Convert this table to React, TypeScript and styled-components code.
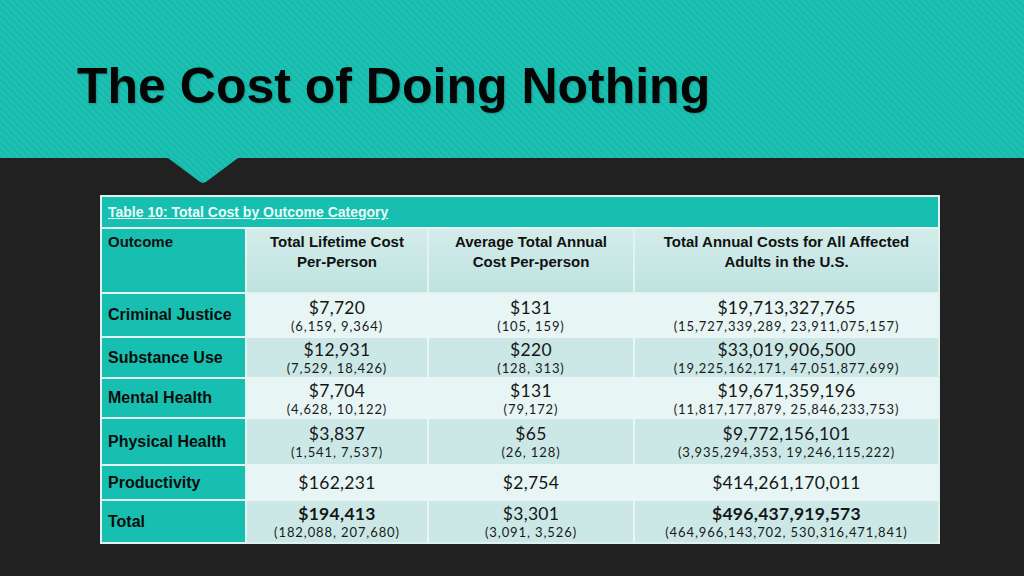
import React from 'react';
import styled, { createGlobalStyle } from 'styled-components';

const GlobalStyle = createGlobalStyle`
  html, body {
    margin: 0;
    padding: 0;
    background: #212121;
  }
  body {
    font-family: "Liberation Sans", Arial, sans-serif;
  }
`;

const Slide = styled.div`
  width: 1024px;
  height: 576px;
  background: #212121;
  display: flex;
  flex-direction: column;
  overflow: hidden;
`;

const TitleBand = styled.header`
  position: relative;
  height: 158px;
  flex: none;
  display: flex;
  align-items: center;
  padding-left: 77px;
  padding-top: 14px;
  box-sizing: border-box;
  background-color: #1bc2b3;
  background-image: repeating-linear-gradient(
    45deg,
    rgba(0, 0, 0, 0.05) 0px,
    rgba(0, 0, 0, 0.05) 2px,
    rgba(255, 255, 255, 0) 2px,
    rgba(255, 255, 255, 0) 5px
  );

  &::after {
    content: '';
    position: absolute;
    left: 168px;
    top: 158px;
    width: 70px;
    height: 25px;
    background: inherit;
    background-color: #1bc2b3;
    clip-path: polygon(0 0, 100% 0, 54% 96%, 50% 100%, 46% 96%);
  }
`;

const Title = styled.h1`
  margin: 0;
  font-family: "Liberation Sans", Arial, sans-serif;
  font-weight: 700;
  font-size: 50px;
  color: #050505;
  letter-spacing: 0;
  text-shadow: 1px 1px 2px rgba(0, 0, 0, 0.2);
`;

const Body = styled.main`
  padding: 37px 0 0 100px;
`;

const Table = styled.table`
  width: 840px;
  border-collapse: separate;
  border-spacing: 0;
  border: 2px solid #dff2f0;
  background: #dff2f0;
  font-family: "Liberation Sans", Arial, sans-serif;
`;

const CaptionCell = styled.th`
  background: #17bfb0;
  height: 30px;
  padding: 0 6px;
  text-align: left;
  font-size: 14px;
  font-weight: 700;
  color: #e9fbf9;
  text-decoration: underline;
  border-bottom: 2px solid #e6f5f3;
`;

const HeadCell = styled.th<{ $first?: boolean }>`
  height: 65px;
  box-sizing: border-box;
  vertical-align: top;
  padding: 3px 6px 0;
  font-size: 15px;
  line-height: 20px;
  font-weight: 700;
  color: #111;
  text-align: ${p => (p.$first ? 'left' : 'center')};
  background: ${p => (p.$first ? '#17bfb0' : 'linear-gradient(#d3ecea, #bfe3e0)')};
  border-right: 2px solid #e3f3f2;
  border-bottom: 2px solid #e3f3f2;

  &:last-child {
    border-right: none;
  }
`;

const LabelCell = styled.td`
  background: #17bfb0;
  padding: 0 6px;
  font-size: 16px;
  font-weight: 700;
  color: #0c0c0c;
  white-space: nowrap;
  border-right: 2px solid #e3f3f2;
  border-bottom: 2px solid #e3f3f2;
`;

const ValueCell = styled.td<{ $shade: boolean }>`
  text-align: center;
  padding: 0;
  background: ${p => (p.$shade ? '#cbe8e6' : '#e7f5f4')};
  border-right: 2px solid #e9f6f5;
  border-bottom: 2px solid #e9f6f5;
  color: #1c1c1c;

  &:last-child {
    border-right: none;
  }
`;

const BodyRow = styled.tr<{ $h: number }>`
  height: ${p => p.$h}px;

  &:last-child td {
    border-bottom: none;
  }
`;

const Main = styled.div<{ $bold?: boolean }>`
  font-family: Lato, "Liberation Sans", sans-serif;
  font-size: 17.5px;
  line-height: 21px;
  letter-spacing: 0.3px;
  font-weight: ${p => (p.$bold ? 700 : 400)};
  color: #161616;
`;

const Sub = styled.div`
  font-family: Lato, "Liberation Sans", sans-serif;
  font-size: 13px;
  line-height: 16px;
  letter-spacing: 0.9px;
  font-weight: 400;
  color: #1a1a1a;
`;

type Value = { main: string; sub?: string };
type Row = { label: string; h: number; values: Value[] };

const rows: Row[] = [
  {
    label: 'Criminal Justice',
    h: 44,
    values: [
      { main: '$7,720', sub: '(6,159, 9,364)' },
      { main: '$131', sub: '(105, 159)' },
      { main: '$19,713,327,765', sub: '(15,727,339,289, 23,911,075,157)' },
    ],
  },
  {
    label: 'Substance Use',
    h: 41,
    values: [
      { main: '$12,931', sub: '(7,529, 18,426)' },
      { main: '$220', sub: '(128, 313)' },
      { main: '$33,019,906,500', sub: '(19,225,162,171, 47,051,877,699)' },
    ],
  },
  {
    label: 'Mental Health',
    h: 40,
    values: [
      { main: '$7,704', sub: '(4,628, 10,122)' },
      { main: '$131', sub: '(79,172)' },
      { main: '$19,671,359,196', sub: '(11,817,177,879, 25,846,233,753)' },
    ],
  },
  {
    label: 'Physical Health',
    h: 47,
    values: [
      { main: '$3,837', sub: '(1,541, 7,537)' },
      { main: '$65', sub: '(26, 128)' },
      { main: '$9,772,156,101', sub: '(3,935,294,353, 19,246,115,222)' },
    ],
  },
  {
    label: 'Productivity',
    h: 35,
    values: [{ main: '$162,231' }, { main: '$2,754' }, { main: '$414,261,170,011' }],
  },
  {
    label: 'Total',
    h: 41,
    values: [
      { main: '$194,413', sub: '(182,088, 207,680)' },
      { main: '$3,301', sub: '(3,091, 3,526)' },
      { main: '$496,437,919,573', sub: '(464,966,143,702, 530,316,471,841)' },
    ],
  },
];

// which value columns get bold main figures in the Total row
const boldCols = [0, 2];

export default function App() {
  return (
    <Slide>
      <GlobalStyle />
      <TitleBand>
        <Title>The Cost of Doing Nothing</Title>
      </TitleBand>
      <Body>
        <Table>
          <colgroup>
            <col style={{ width: 145 }} />
            <col style={{ width: 182 }} />
            <col style={{ width: 206 }} />
            <col />
          </colgroup>
          <thead>
            <tr>
              <CaptionCell colSpan={4}>Table 10: Total Cost by Outcome Category</CaptionCell>
            </tr>
            <tr>
              <HeadCell $first>Outcome</HeadCell>
              <HeadCell>
                Total Lifetime Cost
                <br />
                Per-Person
              </HeadCell>
              <HeadCell>
                Average Total Annual
                <br />
                Cost Per-person
              </HeadCell>
              <HeadCell>
                Total Annual Costs for All Affected
                <br />
                Adults in the U.S.
              </HeadCell>
            </tr>
          </thead>
          <tbody>
            {rows.map((row, i) => (
              <BodyRow key={row.label} $h={row.h}>
                <LabelCell>{row.label}</LabelCell>
                {row.values.map((v, c) => (
                  <ValueCell key={c} $shade={i % 2 === 1}>
                    <Main $bold={row.label === 'Total' && boldCols.includes(c)}>{v.main}</Main>
                    {v.sub && <Sub>{v.sub}</Sub>}
                  </ValueCell>
                ))}
              </BodyRow>
            ))}
          </tbody>
        </Table>
      </Body>
    </Slide>
  );
}
